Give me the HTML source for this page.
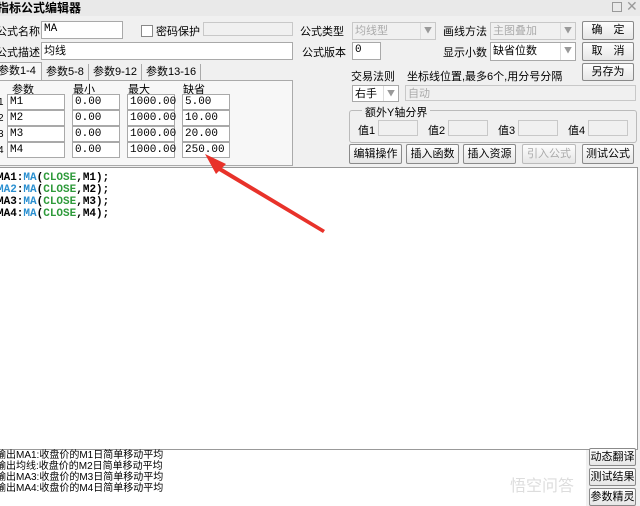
<!DOCTYPE html>
<html><head><meta charset="utf-8"><style>
body{margin:0;width:640px;height:506px;overflow:hidden;background:#f0f0f0;font-family:"Liberation Sans","Noto Sans CJK SC",sans-serif;font-size:11px;color:#000;position:relative}
.a{position:absolute;white-space:nowrap}
.in{position:absolute;background:#fff;border:1px solid #a9a9a9;box-sizing:border-box;font-size:11px;line-height:14px;padding-left:2px;font-family:"Liberation Mono","Noto Sans CJK SC",monospace}
.dis{background:#f0f0f0;color:#aaa;border-color:#c8c8c8}
.btn{position:absolute;background:linear-gradient(#fdfdfd,#e6e6e6);border:1px solid #8a8a8a;box-sizing:border-box;text-align:center;font-size:11px;border-radius:2px}
.cb{position:absolute;width:14px;border-left:1px solid #ddd;right:0;top:0;bottom:0;color:#999;font-size:8px;text-align:center;line-height:16px}
.code{font-family:"Liberation Mono",monospace;font-weight:bold;font-size:11px;line-height:12px}
.b{color:#2a8fd0}.g{color:#2e9a3a}
</style></head><body>
<div class="a" style="left:0;top:0;width:640px;height:16px;background:#e9e9e9"></div>
<div class="a" style="left:-3px;top:0;font-weight:bold;font-size:12px;line-height:16px">指标公式编辑器</div>
<div class="a" style="left:612px;top:2px;width:8px;height:8px;border:1px solid #999"></div>
<div class="a" style="left:626px;top:-2px;color:#999;font-size:14px">✕</div>

<div class="a" style="left:-4px;top:23px">公式名称</div>
<div class="in" style="left:41px;top:21px;width:82px;height:18px">MA</div>
<div class="a" style="left:141px;top:25px;width:10px;height:10px;border:1px solid #888;background:#fff"></div>
<div class="a" style="left:156px;top:23px">密码保护</div>
<div class="in dis" style="left:203px;top:22px;width:90px;height:14px"></div>
<div class="a" style="left:-4px;top:44px">公式描述</div>
<div class="in" style="left:41px;top:42px;width:252px;height:18px;font-family:'Noto Sans CJK SC'">均线</div>

<div class="a" style="left:-3px;top:62px;width:43px;height:18px;background:#f7f7f7;border:1px solid #aaa;border-bottom:none;line-height:16px">参数1-4</div>
<div class="a" style="left:46px;top:64px;line-height:16px;border-right:1px solid #aaa;padding-right:4px">参数5-8</div>
<div class="a" style="left:93px;top:64px;line-height:16px;border-right:1px solid #aaa;padding-right:4px">参数9-12</div>
<div class="a" style="left:146px;top:64px;line-height:16px;border-right:1px solid #aaa;padding-right:4px">参数13-16</div>
<div class="a" style="left:-1px;top:80px;width:292px;height:84px;border:1px solid #aaa;background:#f7f7f7"></div>
<div class="a" style="left:12px;top:81px">参数</div><div class="a" style="left:73px;top:81px">最小</div><div class="a" style="left:128px;top:81px">最大</div><div class="a" style="left:183px;top:81px">缺省</div>

<div class="a" style="left:-2px;top:95px;font-size:10px;line-height:16px">1<br>2<br>3<br>4</div>
<div class="in" style="left:7px;top:94px;width:58px;height:16px">M1</div><div class="in" style="left:72px;top:94px;width:48px;height:16px">0.00</div><div class="in" style="left:127px;top:94px;width:48px;height:16px">1000.00</div><div class="in" style="left:182px;top:94px;width:48px;height:16px">5.00</div>
<div class="in" style="left:7px;top:110px;width:58px;height:16px">M2</div><div class="in" style="left:72px;top:110px;width:48px;height:16px">0.00</div><div class="in" style="left:127px;top:110px;width:48px;height:16px">1000.00</div><div class="in" style="left:182px;top:110px;width:48px;height:16px">10.00</div>
<div class="in" style="left:7px;top:126px;width:58px;height:16px">M3</div><div class="in" style="left:72px;top:126px;width:48px;height:16px">0.00</div><div class="in" style="left:127px;top:126px;width:48px;height:16px">1000.00</div><div class="in" style="left:182px;top:126px;width:48px;height:16px">20.00</div>
<div class="in" style="left:7px;top:142px;width:58px;height:16px">M4</div><div class="in" style="left:72px;top:142px;width:48px;height:16px">0.00</div><div class="in" style="left:127px;top:142px;width:48px;height:16px">1000.00</div><div class="in" style="left:182px;top:142px;width:48px;height:16px">250.00</div>

<div class="a" style="left:300px;top:23px">公式类型</div>
<div class="in dis" style="left:352px;top:22px;width:84px;height:18px;font-family:'Noto Sans CJK SC'">均线型<div class="cb">▼</div></div>
<div class="a" style="left:443px;top:23px">画线方法</div>
<div class="in dis" style="left:490px;top:22px;width:86px;height:18px;font-family:'Noto Sans CJK SC'">主图叠加<div class="cb">▼</div></div>
<div class="btn" style="left:582px;top:21px;width:52px;height:19px;line-height:17px">确　定</div>
<div class="a" style="left:302px;top:44px">公式版本</div>
<div class="in" style="left:352px;top:42px;width:29px;height:18px">0</div>
<div class="a" style="left:443px;top:44px">显示小数</div>
<div class="in" style="left:490px;top:42px;width:86px;height:19px;font-family:'Noto Sans CJK SC';font-size:11px">缺省位数<div class="cb">▼</div></div>
<div class="btn" style="left:582px;top:42px;width:52px;height:19px;line-height:17px">取　消</div>
<div class="btn" style="left:582px;top:63px;width:52px;height:18px;line-height:16px">另存为</div>
<div class="a" style="left:351px;top:68px">交易法则</div>
<div class="a" style="left:407px;top:68px">坐标线位置,最多6个,用分号分隔</div>
<div class="in" style="left:352px;top:85px;width:47px;height:17px;font-family:'Noto Sans CJK SC';font-size:11px">右手<div class="cb">▼</div></div>
<div class="in dis" style="left:405px;top:85px;width:231px;height:16px;font-family:'Noto Sans CJK SC'">自动</div>
<div class="a" style="left:349px;top:110px;width:286px;height:31px;border:1px solid #bbb;border-radius:3px"></div>
<div class="a" style="left:362px;top:104px;background:#f0f0f0;padding:0 3px">额外Y轴分界</div>
<div class="a" style="left:358px;top:122px">值1</div><div class="in dis" style="left:378px;top:120px;width:40px;height:16px"></div>
<div class="a" style="left:428px;top:122px">值2</div><div class="in dis" style="left:448px;top:120px;width:40px;height:16px"></div>
<div class="a" style="left:498px;top:122px">值3</div><div class="in dis" style="left:518px;top:120px;width:40px;height:16px"></div>
<div class="a" style="left:568px;top:122px">值4</div><div class="in dis" style="left:588px;top:120px;width:40px;height:16px"></div>
<div class="btn" style="left:349px;top:144px;width:53px;height:20px;line-height:18px">编辑操作</div>
<div class="btn" style="left:406px;top:144px;width:53px;height:20px;line-height:18px">插入函数</div>
<div class="btn" style="left:463px;top:144px;width:53px;height:20px;line-height:18px">插入资源</div>
<div class="btn" style="left:522px;top:144px;width:54px;height:20px;line-height:18px;color:#aaa;border-color:#bbb">引入公式</div>
<div class="btn" style="left:582px;top:144px;width:52px;height:20px;line-height:18px">测试公式</div>

<div class="a" style="left:-1px;top:167px;width:637px;height:281px;background:#fff;border:1px solid #999"></div>
<div class="a code" style="left:-3px;top:172px">MA1:<span class="b">MA</span>(<span class="g">CLOSE</span>,M1);<br><span class="b">MA2</span>:<span class="b">MA</span>(<span class="g">CLOSE</span>,M2);<br>MA3:<span class="b">MA</span>(<span class="g">CLOSE</span>,M3);<br>MA4:<span class="b">MA</span>(<span class="g">CLOSE</span>,M4);</div>

<div class="a" style="left:0;top:450px;width:586px;height:56px;background:#fff"></div>
<div class="a" style="left:-4px;top:450px;font-size:10px;line-height:11px">输出MA1:收盘价的M1日简单移动平均<br>输出均线:收盘价的M2日简单移动平均<br>输出MA3:收盘价的M3日简单移动平均<br>输出MA4:收盘价的M4日简单移动平均</div>
<div class="btn" style="left:589px;top:448px;width:47px;height:18px;line-height:16px">动态翻译</div>
<div class="btn" style="left:589px;top:468px;width:47px;height:18px;line-height:16px">测试结果</div>
<div class="btn" style="left:589px;top:488px;width:47px;height:18px;line-height:16px">参数精灵</div>
<div class="a" style="left:510px;top:472px;color:#ddd;font-size:16px">悟空问答</div>

<svg class="a" style="left:0;top:0" width="640" height="506"><polygon points="325,230 222,168 226,164 205,154 216,174 219,171 323,233" fill="#e8322a"/></svg>
</body></html>
